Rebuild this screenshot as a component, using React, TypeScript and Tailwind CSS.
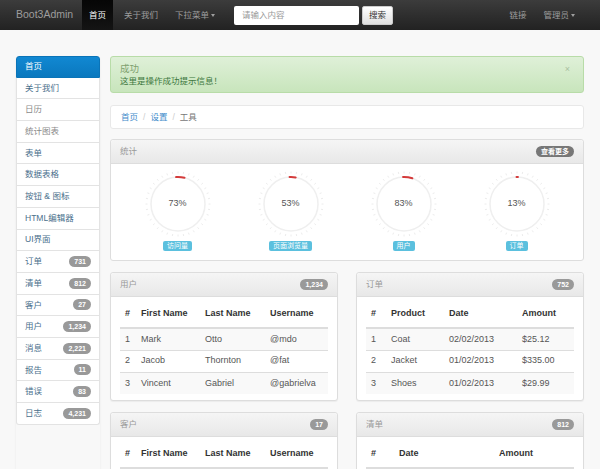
import React from 'react';

const font = { fontFamily: '"Liberation Sans", "Noto Sans CJK SC", sans-serif' };

const sideItems: { label: string; badge?: string; muted?: boolean }[] = [
  { label: '首页' },
  { label: '关于我们' },
  { label: '日历', muted: true },
  { label: '统计图表', muted: true },
  { label: '表单' },
  { label: '数据表格' },
  { label: '按钮 & 图标' },
  { label: 'HTML编辑器' },
  { label: 'UI界面' },
  { label: '订单', badge: '731' },
  { label: '清单', badge: '812' },
  { label: '客户', badge: '27' },
  { label: '用户', badge: '1,234' },
  { label: '消息', badge: '2,221' },
  { label: '报告', badge: '11' },
  { label: '错误', badge: '83' },
  { label: '日志', badge: '4,231' },
];

const gauges = [
  { value: '73%', label: '访问量', from: -4, to: 14 },
  { value: '53%', label: '页面浏览量', from: -3, to: 10 },
  { value: '83%', label: '用户', from: -2, to: 18 },
  { value: '13%', label: '订单', from: -1, to: 2 },
];

function pt(r: number, deg: number) {
  const a = (deg * Math.PI) / 180;
  return [35 + r * Math.sin(a), 35 - r * Math.cos(a)];
}

function Gauge({ value, label, from, to }: { value: string; label: string; from: number; to: number }) {
  const [x0, y0] = pt(27, from);
  const [x1, y1] = pt(27, to);
  const ticks = Array.from({ length: 36 }, (_, i) => i * 10);
  return (
    <div className="flex flex-col items-center">
      <div className="relative w-[70px] h-[70px]">
        <svg width="70" height="70" viewBox="0 0 70 70">
          {ticks.map((d) => {
            const [ax, ay] = pt(30.5, d);
            const [bx, by] = pt(32.5, d);
            return <line key={d} x1={ax} y1={ay} x2={bx} y2={by} stroke="#ececec" strokeWidth="1" />;
          })}
          <circle cx="35" cy="35" r="27" fill="#fff" stroke="#efefef" strokeWidth="1.5" />
          <path d={`M${x0} ${y0} A27 27 0 0 1 ${x1} ${y1}`} fill="none" stroke="#d43a3a" strokeWidth="2" strokeLinecap="round" />
        </svg>
        <div className="absolute inset-0 flex items-center justify-center text-[9px] text-[#555]">{value}</div>
      </div>
      <span className="mt-[2px] bg-[#5bc0de] text-white text-[7px] leading-[10px] px-[4px] rounded-[2px]">{label}</span>
    </div>
  );
}

function Badge({ children, dark }: { children: React.ReactNode; dark?: boolean }) {
  return (
    <span className={`${dark ? 'bg-[#777]' : 'bg-[#999]'} text-white text-[7px] font-bold leading-[11px] px-[5px] rounded-full`}>
      {children}
    </span>
  );
}

function Panel({ title, badge, children }: { title: string; badge: string; children: React.ReactNode }) {
  return (
    <div className="bg-white border border-[#ddd] rounded-[3px] shadow-[0_1px_1px_rgba(0,0,0,0.05)]">
      <div className="h-[24px] px-[9px] flex items-center justify-between border-b border-[#ddd] rounded-t-[3px] bg-gradient-to-b from-[#f5f5f5] to-[#e8e8e8]">
        <span className="text-[8.5px] text-[#999]">{title}</span>
        <Badge>{badge}</Badge>
      </div>
      <div className="px-[9px] pt-[4px] pb-[6px]">{children}</div>
    </div>
  );
}

function DataTable({ cols, widths, rows }: { cols: string[]; widths: string[]; rows: string[][] }) {
  return (
    <table className="w-full border-collapse text-[9px]">
      <colgroup>
        {widths.map((w, i) => (
          <col key={i} style={{ width: w }} />
        ))}
      </colgroup>
      <thead>
        <tr className="h-[27px] border-b-2 border-[#ddd]">
          {cols.map((c) => (
            <th key={c} className="text-left font-bold text-[#333] px-[5px]">{c}</th>
          ))}
        </tr>
      </thead>
      <tbody>
        {rows.map((r, i) => (
          <tr key={i} className={`h-[22px] border-t border-[#ddd] ${i % 2 === 0 ? 'bg-[#f9f9f9]' : 'bg-white'}`}>
            {r.map((c, j) => (
              <td key={j} className="px-[5px] text-[#555]">{c}</td>
            ))}
          </tr>
        ))}
      </tbody>
    </table>
  );
}

export default function App() {
  return (
    <div className="w-[600px] h-[469px] overflow-hidden bg-[#f8f8f8]" style={font}>
      {/* navbar */}
      <div className="h-[30px] bg-gradient-to-b from-[#3c3c3c] to-[#222] flex items-center text-[8.5px] text-[#9d9d9d]">
        <span className="ml-[16px] w-[66px] text-[10.5px] text-[#9d9d9d]">Boot3Admin</span>
        <span className="h-[30px] w-[31px] flex items-center justify-center text-white bg-gradient-to-b from-[#060606] to-[#141414]">首页</span>
        <span className="ml-[11px]">关于我们</span>
        <span className="ml-[17px] flex items-center">
          下拉菜单
          <span className="ml-[2px] w-0 h-0 border-l-[2.5px] border-r-[2.5px] border-t-[3px] border-l-transparent border-r-transparent border-t-[#9d9d9d]" />
        </span>
        <div className="ml-[19px] w-[125px] h-[19px] bg-white rounded-[2px] flex items-center px-[8px] text-[#999]">请输入内容</div>
        <div className="ml-[3px] w-[31px] h-[19px] rounded-[2px] border border-[#ccc] bg-gradient-to-b from-white to-[#e0e0e0] flex items-center justify-center text-[#333]">搜索</div>
        <span className="ml-auto">链接</span>
        <span className="ml-[17px] mr-[25px] flex items-center">
          管理员
          <span className="ml-[2px] w-0 h-0 border-l-[2.5px] border-r-[2.5px] border-t-[3px] border-l-transparent border-r-transparent border-t-[#9d9d9d]" />
        </span>
      </div>

      <div className="flex gap-[10px] pl-[16px] pt-[26px]">
        {/* sidebar */}
        <div className="w-[84px] shrink-0 rounded-[3px] shadow-[0_1px_2px_rgba(0,0,0,0.075)]">
          {sideItems.map((it, i) =>
            i === 0 ? (
              <div key={it.label} className="h-[21.7px] px-[8px] flex items-center rounded-t-[3px] text-[8.5px] text-white bg-gradient-to-b from-[#1188d2] to-[#0a78be] border border-[#0a74b8]">
                {it.label}
              </div>
            ) : (
              <div key={it.label} className={`h-[21.7px] px-[8px] flex items-center justify-between bg-white border border-t-0 border-[#e3e3e3] text-[8.5px] ${it.muted ? 'text-[#8a8a8a]' : 'text-[#4a6f8c]'} ${i === sideItems.length - 1 ? 'rounded-b-[3px]' : ''}`}>
                <span>{it.label}</span>
                {it.badge && <Badge>{it.badge}</Badge>}
              </div>
            )
          )}
        </div>

        {/* main */}
        <div className="w-[474px] flex flex-col">
          <div className="h-[37px] rounded-[3px] border border-[#b8dca8] bg-gradient-to-b from-[#dff0d8] to-[#c8e5bc] px-[9px] flex items-center justify-between">
            <div className="flex flex-col text-[8.5px] leading-[13px]">
              <span className="text-[#7fa06e] text-[9.5px]">成功</span>
              <span className="text-[#3c763d]">这里是操作成功提示信息！</span>
            </div>
            <span className="text-[#a9bfa0] text-[9px] self-start mt-[6px] mr-[4px]">×</span>
          </div>

          <div className="mt-[12px] h-[24px] bg-white border border-[#e8e8e8] rounded-[3px] px-[10px] flex items-center text-[8.5px]">
            <span className="text-[#428bca]">首页</span>
            <span className="text-[#ccc] mx-[5px]">/</span>
            <span className="text-[#428bca]">设置</span>
            <span className="text-[#ccc] mx-[5px]">/</span>
            <span className="text-[#777]">工具</span>
          </div>

          <div className="mt-[10px] bg-white border border-[#ddd] rounded-[3px]">
            <div className="h-[24px] px-[9px] flex items-center justify-between border-b border-[#ddd] rounded-t-[3px] bg-gradient-to-b from-[#f5f5f5] to-[#e8e8e8]">
              <span className="text-[8.5px] text-[#999]">统计</span>
              <Badge dark>查看更多</Badge>
            </div>
            <div className="grid grid-cols-4 px-[10px] pt-[5px] pb-[9px]">
              {gauges.map((g) => (
                <Gauge key={g.label} {...g} />
              ))}
            </div>
          </div>

          <div className="mt-[11px] grid grid-cols-2 gap-x-[18px] gap-y-[11px]">
            <Panel title="用户" badge="1,234">
              <DataTable
                cols={['#', 'First Name', 'Last Name', 'Username']}
                widths={['16px', '64px', '65px', 'auto']}
                rows={[
                  ['1', 'Mark', 'Otto', '@mdo'],
                  ['2', 'Jacob', 'Thornton', '@fat'],
                  ['3', 'Vincent', 'Gabriel', '@gabrielva'],
                ]}
              />
            </Panel>
            <Panel title="订单" badge="752">
              <DataTable
                cols={['#', 'Product', 'Date', 'Amount']}
                widths={['20px', '58px', '73px', 'auto']}
                rows={[
                  ['1', 'Coat', '02/02/2013', '$25.12'],
                  ['2', 'Jacket', '01/02/2013', '$335.00'],
                  ['3', 'Shoes', '01/02/2013', '$29.99'],
                ]}
              />
            </Panel>
            <Panel title="客户" badge="17">
              <DataTable
                cols={['#', 'First Name', 'Last Name', 'Username']}
                widths={['16px', '64px', '65px', 'auto']}
                rows={[]}
              />
            </Panel>
            <Panel title="清单" badge="812">
              <DataTable cols={['#', 'Date', 'Amount']} widths={['28px', '100px', 'auto']} rows={[]} />
            </Panel>
          </div>
        </div>
      </div>
    </div>
  );
}
